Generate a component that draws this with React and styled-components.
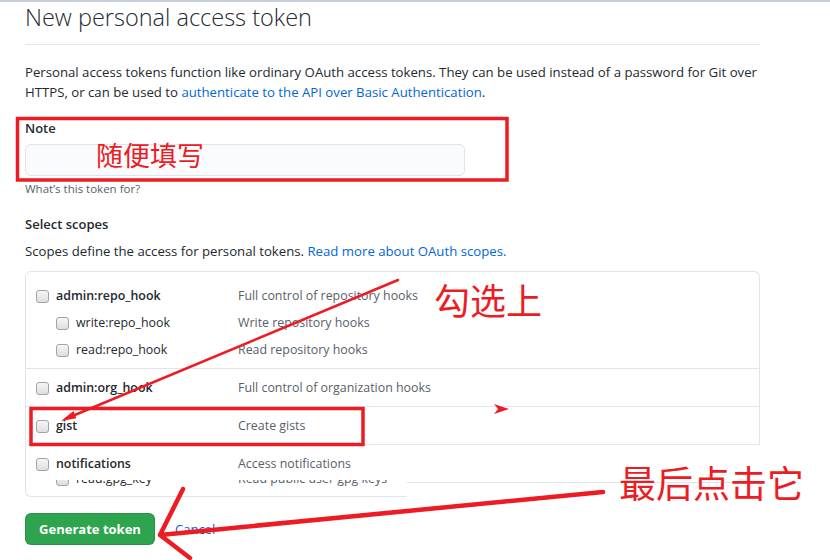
import React from "react";
import styled, { createGlobalStyle } from "styled-components";

const GlobalStyle = createGlobalStyle`
  body {
    margin: 0;
    background: #fff;
    font-family: "Open Sans", "Noto Sans", sans-serif;
    color: #24292e;
  }
`;

const Page = styled.div`
  position: relative;
  width: 830px;
  height: 560px;
  overflow: hidden;
  border-top: 2px solid #c6cddc;
  box-sizing: border-box;
`;

const Content = styled.div`
  width: 735px;
  margin-left: 25px;
`;

const Heading = styled.h2`
  margin: 0;
  padding: 0 0 12px;
  font-size: 23.5px;
  font-weight: 300;
  line-height: 30px;
  border-bottom: 1px solid #e1e4e8;
`;

const Lead = styled.p`
  margin: 17px 0 0;
  font-size: 13.2px;
  line-height: 20px;
`;

const Link = styled.a`
  color: #0366d6;
  text-decoration: none;
`;

const FieldLabel = styled.div`
  margin-top: ${({ $gap }) => $gap}px;
  font-size: 13px;
  font-weight: 600;
  line-height: 20px;
`;

const NoteInput = styled.input`
  display: block;
  box-sizing: border-box;
  width: 440px;
  height: 32px;
  margin-top: 6px;
  background: #fafbfc;
  border: 1px solid #e1e4e8;
  border-radius: 6px;
  outline: none;
`;

const Hint = styled.div`
  margin-top: 4px;
  font-size: 11.5px;
  line-height: 18px;
  color: #586069;
`;

const SubText = styled.p`
  margin: 7px 0 10px;
  font-size: 13.2px;
  line-height: 20px;
`;

const ScopeList = styled.div`
  border: 1px solid #e1e4e8;
  border-bottom: none;
  border-radius: 6px 6px 0 0;
`;

const Group = styled.div`
  display: flex;
  flex-direction: column;
  gap: 7px;
  padding: ${({ $first }) => ($first ? 14 : 9)}px 0 8px;
  & + & {
    border-top: 1px solid #e1e4e8;
  }
`;

const ScopeTail = styled.div`
  border-top: 1px solid #e1e4e8;
`;

const TailGroup = styled.div`
  padding: 9px 0 6px;
  border-left: 1px solid #e1e4e8;
`;

const Strip = styled.div`
  display: flex;
  height: 17px;
`;

const StripLeft = styled.div`
  width: 381px;
  overflow: hidden;
  border-left: 1px solid #e1e4e8;
  border-bottom: 1px solid #e1e4e8;
  border-bottom-left-radius: 6px;
`;

const Clipped = styled.div`
  margin-top: -11px;
`;

const StripRight = styled.div`
  flex: 1;
  margin-top: 2px;
  border-top: 1px solid #e1e4e8;
`;

const Row = styled.div`
  display: flex;
  align-items: center;
  padding-left: ${({ $child }) => ($child ? 30 : 10)}px;
  font-size: 12.4px;
  line-height: 20px;
`;

const Check = styled.span`
  box-sizing: border-box;
  width: 13px;
  height: 13px;
  margin-right: 7px;
  border: 1px solid #a3a3a3;
  border-radius: 3px;
  background: linear-gradient(#f6f6f6, #dedede);
  flex-shrink: 0;
`;

const Name = styled.span`
  width: ${({ $child }) => ($child ? 162 : 182)}px;
  font-weight: ${({ $child }) => ($child ? 400 : 600)};
`;

const Desc = styled.span`
  color: #586069;
`;

const Actions = styled.div`
  display: flex;
  align-items: center;
  gap: 20px;
  margin-top: 16px;
`;

const PrimaryButton = styled.button`
  width: 130px;
  height: 32px;
  padding: 0;
  background: #2ea44f;
  color: #fff;
  font-family: inherit;
  font-size: 13px;
  font-weight: 700;
  border: 1px solid rgba(27, 31, 35, 0.15);
  border-radius: 6px;
`;

const CancelLink = styled(Link)`
  font-size: 13px;
`;

const Overlay = styled.svg`
  position: absolute;
  left: 0;
  top: 0;
  pointer-events: none;
`;

const Note = styled.span`
  position: absolute;
  left: ${({ $x }) => $x}px;
  top: ${({ $y }) => $y}px;
  font-family: "Noto Sans CJK SC", sans-serif;
  font-size: ${({ $size }) => $size}px;
  line-height: 1;
  color: #ed1c24;
  white-space: nowrap;
`;

function Scope({ name, desc, child }) {
  return (
    <Row $child={child}>
      <Check />
      <Name $child={child}>{name}</Name>
      <Desc>{desc}</Desc>
    </Row>
  );
}

export default function App() {
  return (
    <Page>
      <GlobalStyle />
      <Content>
        <Heading>New personal access token</Heading>
        <Lead>
          Personal access tokens function like ordinary OAuth access tokens. They can be used
          instead of a password for Git over
          <br />
          HTTPS, or can be used to{" "}
          <Link>authenticate to the API over Basic Authentication</Link>.
        </Lead>

        <FieldLabel $gap={16}>Note</FieldLabel>
        <NoteInput />
        <Hint>What’s this token for?</Hint>

        <FieldLabel $gap={16}>Select scopes</FieldLabel>
        <SubText>
          Scopes define the access for personal tokens.{" "}
          <Link>Read more about OAuth scopes.</Link>
        </SubText>

        <ScopeList>
          <Group $first>
            <Scope name="admin:repo_hook" desc="Full control of repository hooks" />
            <Scope child name="write:repo_hook" desc="Write repository hooks" />
            <Scope child name="read:repo_hook" desc="Read repository hooks" />
          </Group>
          <Group>
            <Scope name="admin:org_hook" desc="Full control of organization hooks" />
          </Group>
          <Group>
            <Scope name="gist" desc="Create gists" />
          </Group>
        </ScopeList>
        <ScopeTail>
          <TailGroup>
            <Scope name="notifications" desc="Access notifications" />
          </TailGroup>
          <Strip>
            <StripLeft>
              <Clipped>
                <Scope child name="read:gpg_key" desc="Read public user gpg keys" />
              </Clipped>
            </StripLeft>
            <StripRight />
          </Strip>
        </ScopeTail>

        <Actions>
          <PrimaryButton>Generate token</PrimaryButton>
          <CancelLink>Cancel</CancelLink>
        </Actions>
      </Content>

      <Overlay width="830" height="560" viewBox="0 0 830 560">
        <g fill="none" stroke="#ed1c24" strokeLinecap="round">
          <rect x="17.5" y="116.5" width="489.5" height="61.5" strokeWidth="3.5" strokeLinecap="butt" />
          <rect x="31" y="406.5" width="332" height="36" strokeWidth="3.5" strokeLinecap="butt" />
          <line x1="398" y1="278" x2="70" y2="415" strokeWidth="2.5" />
          <path d="M603 490 L160 533 M183 487 L160 533 L190 556" strokeWidth="4.5" strokeLinejoin="round" />
        </g>
        <g fill="#ed1c24">
          <polygon points="61,419 73.4,408.9 76.4,416.3" />
          <polygon points="494,402 509,407 494,412 498,407" />
        </g>
      </Overlay>
      <Note $x={96} $y={139} $size={27}>随便填写</Note>
      <Note $x={434} $y={279} $size={36}>勾选上</Note>
      <Note $x={619} $y={462} $size={37}>最后点击它</Note>
    </Page>
  );
}
